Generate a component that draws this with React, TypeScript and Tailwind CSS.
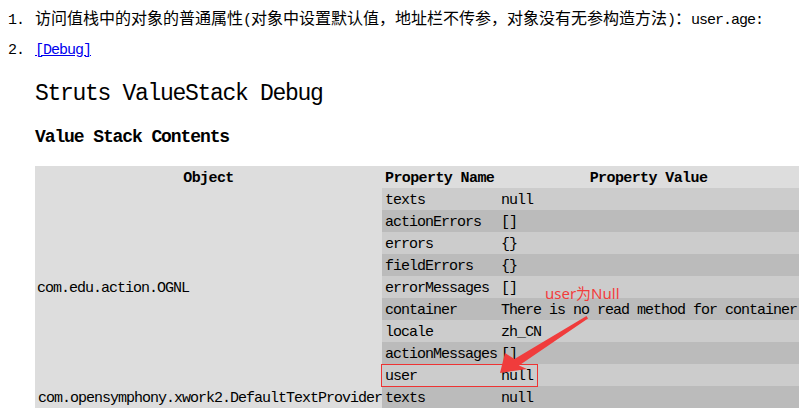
import React from "react";

const mono = "font-['Liberation_Mono',monospace]";
const cn = "font-['Noto_Sans_CJK_SC','Noto_Sans',sans-serif]";

const rows = [
  { name: "texts", value: "null" },
  { name: "actionErrors", value: "[]" },
  { name: "errors", value: "{}" },
  { name: "fieldErrors", value: "{}" },
  { name: "errorMessages", value: "[]" },
  { name: "container", value: "There is no read method for container" },
  { name: "locale", value: "zh_CN" },
  { name: "actionMessages", value: "[]" },
  { name: "user", value: "null" },
];

const Cn = ({ children }: { children: React.ReactNode }) => (
  <span className={`${cn} text-[16px]`}>{children}</span>
);
const Mono = ({ children }: { children: React.ReactNode }) => (
  <span className={`${mono} text-[15px] tracking-[-1px]`}>{children}</span>
);

const cell = `${mono} text-[15px] tracking-[-1px] h-[22px] p-0 pt-[5px] pl-[3px] leading-[16px] whitespace-nowrap text-left align-top`;
const head = `${mono} h-[22px] p-0 pt-[5px] leading-[16px] text-[15px] tracking-[-0.6px] font-bold align-top whitespace-nowrap`;

const App = () => {
  return (
    <div className="relative w-[812px] h-[420px] bg-white overflow-hidden text-black">
      <div className="pt-2">
        <div className="flex items-baseline h-[18px] leading-[18px]">
          <span className={`${mono} w-[35px] pl-2 text-[15px] tracking-[-1px]`}>1.</span>
          <div className="whitespace-nowrap">
            <Cn>访问值栈中的对象的普通属性</Cn>
            <Mono>(</Mono>
            <Cn>对象中设置默认值，地址栏不传参，对象没有无参构造方法</Cn>
            <Mono>)</Mono>
            <Cn>：</Cn>
            <Mono>user.age:</Mono>
          </div>
        </div>

        <div className="flex items-baseline h-[18px] leading-[18px] mt-[16px]">
          <span className={`${mono} w-[35px] pl-2 text-[15px] tracking-[-1px]`}>2.</span>
          <a href="#" className={`${mono} text-[15px] tracking-[-1px] text-[#0000ee] underline`}>
            [Debug]
          </a>
        </div>

        <div className="pl-[35px]">
          <h1 className={`${mono} mt-[18px] h-[32px] leading-[32px] text-[23px] tracking-[-1.3px] font-normal`}>
            Struts ValueStack Debug
          </h1>
          <h3 className={`${mono} mt-[15px] h-[24px] leading-[24px] text-[18px] tracking-[-1.1px] font-bold`}>
            Value Stack Contents
          </h3>

          <table className="mt-[17px] w-[764px] table-fixed border-collapse">
            <colgroup>
              <col className="w-[347px]" />
              <col className="w-[116px]" />
              <col className="w-[301px]" />
            </colgroup>
            <thead>
              <tr className="bg-[#dddddd]">
                <th className={`${head} text-center`}>Object</th>
                <th className={`${head} pl-[3px] text-left`}>Property Name</th>
                <th className={`${head} text-center`}>Property Value</th>
              </tr>
            </thead>
            <tbody>
              {rows.map((r, i) => (
                <tr key={r.name} className={i % 2 === 0 ? "bg-[#cccccc]" : "bg-[#bbbbbb]"}>
                  {i === 0 && (
                    <td
                      rowSpan={rows.length}
                      className={`${mono} text-[15px] tracking-[-1px] p-0 pl-[2px] pt-[3px] leading-[16px] whitespace-nowrap text-left align-middle bg-[#dddddd]`}
                    >
                      com.edu.action.OGNL
                    </td>
                  )}
                  <td className={cell}>{r.name}</td>
                  <td className={cell}>{r.value}</td>
                </tr>
              ))}
              <tr className="bg-[#bbbbbb]">
                <td className={`${cell} pl-[2px] bg-[#dddddd]`}>com.opensymphony.xwork2.DefaultTextProvider</td>
                <td className={cell}>texts</td>
                <td className={cell}>null</td>
              </tr>
            </tbody>
          </table>
        </div>
      </div>

      {/* screenshot annotation */}
      <span className="absolute left-[545px] top-[285px] text-[15px] leading-[16px] text-[#f23c3c] font-['Noto_Sans','Noto_Sans_CJK_SC',sans-serif]">
        user为Null
      </span>
      <svg className="absolute inset-0 pointer-events-none" width="812" height="420" viewBox="0 0 812 420">
        <rect x="381.5" y="364.5" width="156" height="22" fill="none" stroke="#ee3333" strokeWidth="1" />
        <polygon
          points="500,373 505,353 514.5,359 586.5,316 588,318.5 519,365.5 527,369"
          fill="#f03c3c"
        />
      </svg>
    </div>
  );
};

export default App;
